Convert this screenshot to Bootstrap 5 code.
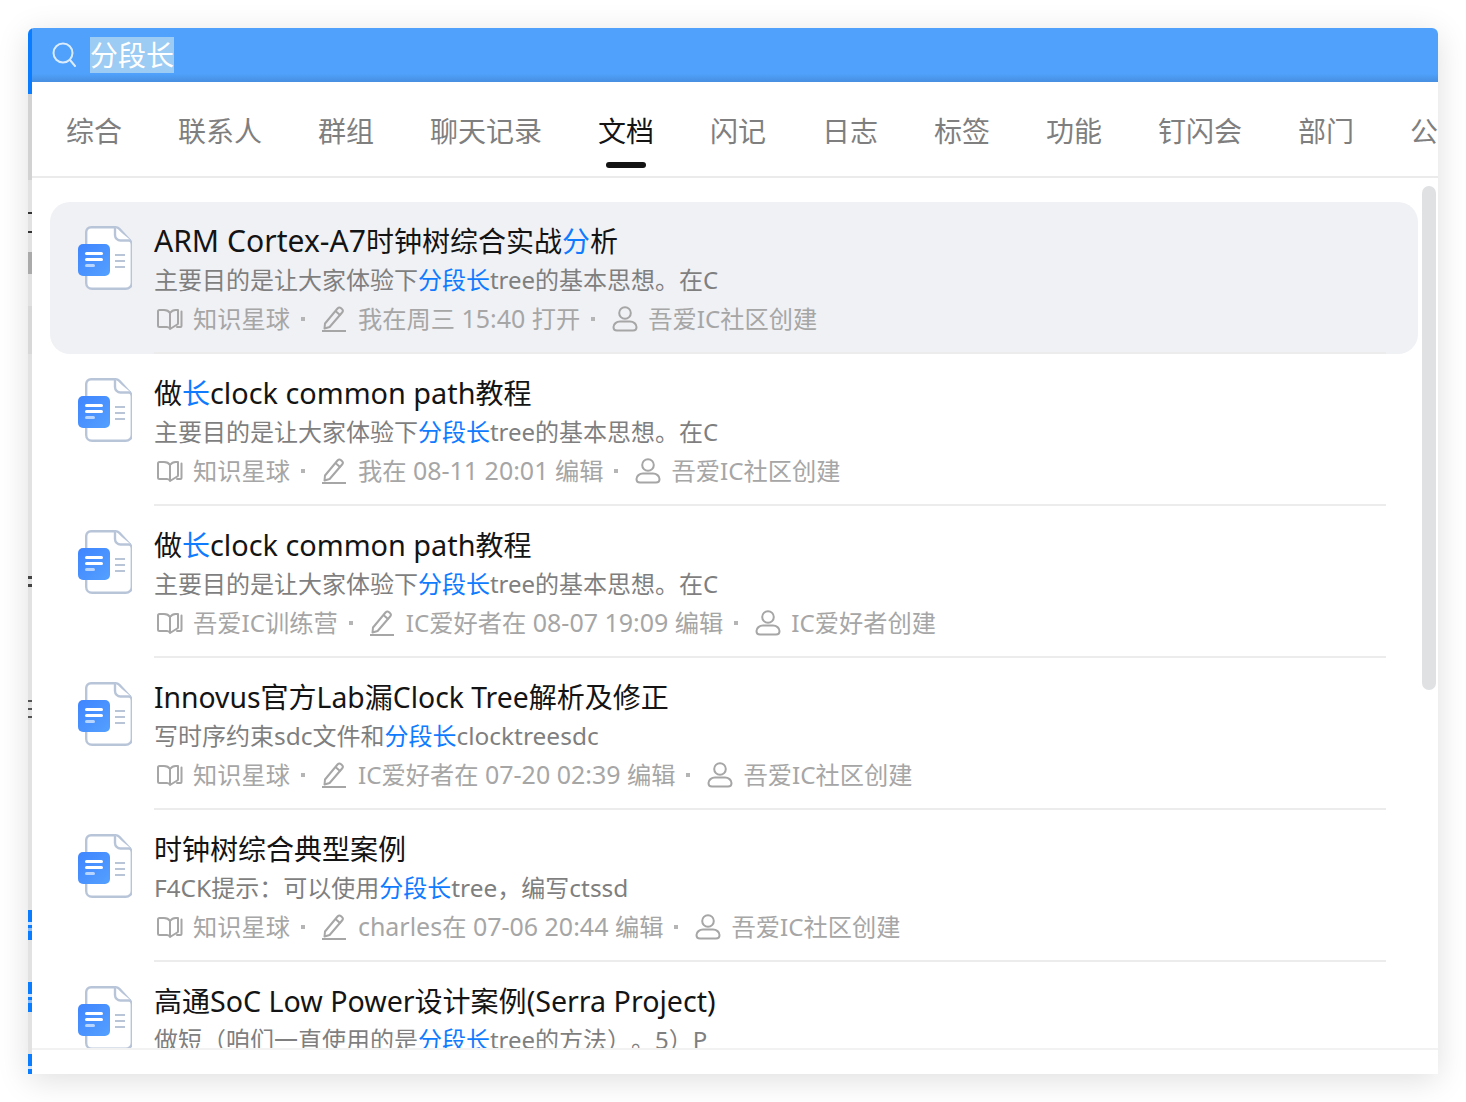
<!DOCTYPE html>
<html lang="zh-CN">
<head>
  <meta charset="UTF-8">
  <title>搜索</title>
  <link href="https://cdn.jsdelivr.net/npm/bootstrap@5.3.3/dist/css/bootstrap.min.css" rel="stylesheet">
  <style>
    body {
      background: #fff;
      padding: 28px;
      font-family: "Noto Sans", "Noto Sans CJK SC", sans-serif;
      overflow: hidden;
    }
    .search-window {
      width: 1410px;
      height: 1046px;
      border-radius: 6px 6px 0 0;
      box-shadow: 0 6px 32px rgba(0, 0, 0, .13);
      overflow: hidden;
    }
    .main-pane { min-width: 0; }
    .left-sliver {
      width: 4px;
      background:
        linear-gradient(#0a7cff 0 66px, transparent 66px),
        linear-gradient(transparent 184px, #333 184px 186px, transparent 186px 203px, #333 203px 205px, transparent 205px 224px, #aaa 224px 246px, transparent 246px 548px, #444 548px 551px, transparent 551px 556px, #444 556px 559px, transparent 559px 672px, #555 672px 674px, transparent 674px 680px, #555 680px 682px, transparent 682px 688px, #555 688px 690px, transparent 690px),
        linear-gradient(transparent 882px, #0a7cff 882px 894px, #cfe3fb 894px 897px, #0a7cff 897px 900px, #8cbcf5 900px 903px, #0a7cff 903px 912px, transparent 912px 954px, #0a7cff 954px 966px, #cfe3fb 966px 969px, #0a7cff 969px 972px, #8cbcf5 972px 975px, #0a7cff 975px 984px, transparent 984px 1026px, #0a7cff 1026px 1038px, #cfe3fb 1038px 1041px, #0a7cff 1041px),
        linear-gradient(transparent 66px, #d2d2d2 66px 152px, #e2e2e2 152px 278px, #d8d8d8 278px 326px, #e2e2e2 326px);
    }
    .search-bar {
      height: 54px;
      padding-left: 20px;
      color: #fff;
      font-size: 28px;
      background: linear-gradient(#4fa1fb 0 46px, #478fe0 54px);
    }
    .search-text {
      background: #9ccbf3;
      height: 36px;
      line-height: 36px;
      margin-left: 14px;
    }
    .tab-strip {
      height: 96px;
      padding: 0 0 0 34px;
      gap: 56px;
      border-bottom: 2px solid #ebebeb;
      overflow: hidden;
    }
    .tab-item {
      position: relative;
      flex: none;
      font-size: 28px;
      line-height: 98px;
      color: #7f7f7f;
    }
    .tab-item.is-active { color: #141414; }
    .tab-item.is-active::after {
      content: "";
      position: absolute;
      left: 8px;
      right: 8px;
      bottom: 8px;
      height: 6px;
      border-radius: 3px;
      background: #141414;
    }
    .result-list {
      height: 870px;
      padding: 24px 20px 0 18px;
      overflow: hidden;
    }
    .list-thumb {
      position: absolute;
      top: 8px;
      right: 2px;
      width: 14px;
      height: 504px;
      border-radius: 7px;
      background: #e0e1e3;
    }
    .result-row {
      height: 152px;
      padding-left: 28px;
      border-radius: 20px;
    }
    .result-row.is-current { background: #f0f1f5; }
    .doc-icon {
      flex: none;
      width: 54px;
      height: 64px;
      margin-top: 24px;
    }
    .result-body {
      flex: 1;
      min-width: 0;
      margin: 0 32px 0 22px;
      padding-top: 20px;
      border-bottom: 2px solid #ececec;
    }
    .result-title {
      font-size: 28px;
      line-height: 38px;
      color: #141414;
    }
    .result-title .lat { font-size: 1.03em; }
    .result-title .lat-wide { font-size: 1.075em; }
    .result-title .lat-mid { font-size: 1.022em; }
    .result-title .lat-slim { font-size: 1.012em; }
    .result-sub {
      font-size: 24px;
      line-height: 40px;
      color: #7f7f7f;
      text-spacing-trim: space-all;
    }
    .result-sub .lat { font-size: 1.02em; }
    .result-meta {
      font-size: 24.25px;
      line-height: 36px;
      color: #a6a6a6;
    }
    .result-meta .lat { font-size: 1.03em; }
    .meta-icon {
      flex: none;
      width: 26px;
      height: 26px;
      margin: 0 10px 0 3px;
    }
    .meta-dot {
      flex: none;
      width: 4px;
      height: 4px;
      margin: 0 14px 0 11px;
      background: #b5b5b5;
    }
    .hit { color: #0f7bff; }
    .search-foot {
      height: 26px;
      border-top: 2px solid #f2f2f2;
    }
  </style>
</head>
<body>

<svg width="0" height="0" class="position-absolute">
  <defs>
    <linearGradient id="docBlue" x1="0" y1="0" x2="1" y2="1">
      <stop offset="0" stop-color="#3f85ff"/>
      <stop offset="1" stop-color="#54a0ff"/>
    </linearGradient>
    <symbol id="docIcon" viewBox="0 0 54 64">
      <path d="M13 1.200h24.500c1.500 0 2.800.6 3.900 1.700l10.700 11.600c1 1.100 1.700 2.400 1.700 3.900V57c0 3.300-2.700 5.800-6 5.800H14c-3.300 0-5.800-2.500-5.800-5.800V6c0-2.800 2-4.800 4.800-4.800z" fill="#fff" stroke="#b8c5d9" stroke-width="2.400"/>
      <path d="M37 1.500V9c0 3 2.500 5.500 5.500 5.500H53" fill="#fff" stroke="#b8c5d9" stroke-width="2.400"/>
      <path d="M37 29h10M37 35h10M37 41h10" stroke="#b8c5d9" stroke-width="2"/>
      <rect x="0" y="18" width="32" height="32" rx="5" fill="url(#docBlue)"/>
      <rect x="7" y="26" width="18" height="3" rx="1.500" fill="#fff"/>
      <rect x="7" y="32" width="18" height="3" rx="1.500" fill="#fff"/>
      <rect x="7" y="38" width="10" height="3" rx="1.500" fill="#b8d5ff"/>
    </symbol>
    <symbol id="bookIcon" viewBox="0 0 26 26">
      <path d="M13 7C11.500 4.500 9.500 4 7 4H2.500C1.700 4 1 4.700 1 5.500v14c0 .8.700 1.500 1.500 1.500H10c1.500 0 2.500.7 3 2V7zM13 7c1.500-2 3-3 5.500-3H21v13.500c0 .5-.3.900-.8 1L13 23" fill="none" stroke="#a6a6a6" stroke-width="2" stroke-linejoin="round"/>
      <path d="M24.500 5.500V20c0 .6-.4 1-1 1H20" fill="none" stroke="#a6a6a6" stroke-width="2" stroke-linecap="round"/>
    </symbol>
    <symbol id="penIcon" viewBox="1 0 26 26">
      <path d="M4 17.500 16.500 2.500c1-1.100 2.500-1.200 3.600-.3l.8.7c1.100 1 1.200 2.500.2 3.600L8.600 21 3.500 22.500z" fill="none" stroke="#a6a6a6" stroke-width="2" stroke-linejoin="round"/>
      <path d="M14.500 5l5 4.500" stroke="#a6a6a6" stroke-width="2"/>
      <path d="M1 25h24" stroke="#a6a6a6" stroke-width="2"/>
    </symbol>
    <symbol id="userIcon" viewBox="0 0 26 26">
      <circle cx="13" cy="7" r="5.800" fill="none" stroke="#a6a6a6" stroke-width="2"/>
      <path d="M8 15.500h10c3.500 0 6.500 2.500 6.500 5.500 0 2.200-1.500 3.500-3.500 3.500H5c-2 0-3.500-1.300-3.500-3.500 0-3 3-5.500 6.500-5.500z" fill="none" stroke="#a6a6a6" stroke-width="2"/>
    </symbol>
  </defs>
</svg>

<div class="search-window d-flex">
  <div class="left-sliver"></div>
  <div class="main-pane flex-grow-1 d-flex flex-column">
    <!-- search -->
    <div class="search-bar d-flex align-items-center">
      <svg width="24" height="26" viewBox="0 0 24 26" fill="none" stroke="#dcecff" stroke-width="2">
        <circle cx="11" cy="11" r="9.500"/>
        <path d="M18 18l5 6" stroke-linecap="round"/>
      </svg>
      <span class="search-text">分段长</span>
    </div>

    <!-- tabs -->
    <div class="tab-strip d-flex">
      <div class="tab-item">综合</div>
      <div class="tab-item">联系人</div>
      <div class="tab-item">群组</div>
      <div class="tab-item">聊天记录</div>
      <div class="tab-item is-active">文档</div>
      <div class="tab-item">闪记</div>
      <div class="tab-item">日志</div>
      <div class="tab-item">标签</div>
      <div class="tab-item">功能</div>
      <div class="tab-item">钉闪会</div>
      <div class="tab-item">部门</div>
      <div class="tab-item">公告</div>
    </div>

    <!-- results -->
    <div class="result-list position-relative">
      <div class="list-thumb"></div>

      <div class="result-row is-current d-flex">
        <svg class="doc-icon"><use href="#docIcon"/></svg>
        <div class="result-body">
          <div class="result-title"><span class="lat-wide">ARM Cortex-A7</span>时钟树综合实战<span class="hit">分</span>析</div>
          <div class="result-sub">主要目的是让大家体验下<span class="hit">分段长</span>tree的基本思想。在C</div>
          <div class="result-meta d-flex align-items-center">
            <svg class="meta-icon"><use href="#bookIcon"/></svg>知识星球<i class="meta-dot"></i>
            <svg class="meta-icon"><use href="#penIcon"/></svg><span>我在周三<span class="lat"> 15:40 </span>打开</span><i class="meta-dot"></i>
            <svg class="meta-icon"><use href="#userIcon"/></svg>吾爱IC社区创建
          </div>
        </div>
      </div>

      <div class="result-row d-flex">
        <svg class="doc-icon"><use href="#docIcon"/></svg>
        <div class="result-body">
          <div class="result-title">做<span class="hit">长</span><span class="lat">clock common path</span>教程</div>
          <div class="result-sub">主要目的是让大家体验下<span class="hit">分段长</span>tree的基本思想。在C</div>
          <div class="result-meta d-flex align-items-center">
            <svg class="meta-icon"><use href="#bookIcon"/></svg>知识星球<i class="meta-dot"></i>
            <svg class="meta-icon"><use href="#penIcon"/></svg><span>我在<span class="lat"> 08-11 20:01 </span>编辑</span><i class="meta-dot"></i>
            <svg class="meta-icon"><use href="#userIcon"/></svg>吾爱IC社区创建
          </div>
        </div>
      </div>

      <div class="result-row d-flex">
        <svg class="doc-icon"><use href="#docIcon"/></svg>
        <div class="result-body">
          <div class="result-title">做<span class="hit">长</span><span class="lat">clock common path</span>教程</div>
          <div class="result-sub">主要目的是让大家体验下<span class="hit">分段长</span>tree的基本思想。在C</div>
          <div class="result-meta d-flex align-items-center">
            <svg class="meta-icon"><use href="#bookIcon"/></svg>吾爱IC训练营<i class="meta-dot"></i>
            <svg class="meta-icon"><use href="#penIcon"/></svg><span>IC爱好者在<span class="lat"> 08-07 19:09 </span>编辑</span><i class="meta-dot"></i>
            <svg class="meta-icon"><use href="#userIcon"/></svg>IC爱好者创建
          </div>
        </div>
      </div>

      <div class="result-row d-flex">
        <svg class="doc-icon"><use href="#docIcon"/></svg>
        <div class="result-body">
          <div class="result-title"><span class="lat-slim">Innovus</span>官方<span class="lat-slim">Lab</span>漏<span class="lat-slim">Clock Tree</span>解析及修正</div>
          <div class="result-sub">写时序约束<span class="lat">sdc</span>文件和<span class="hit">分段长</span><span class="lat">clocktreesdc</span></div>
          <div class="result-meta d-flex align-items-center">
            <svg class="meta-icon"><use href="#bookIcon"/></svg>知识星球<i class="meta-dot"></i>
            <svg class="meta-icon"><use href="#penIcon"/></svg><span>IC爱好者在<span class="lat"> 07-20 02:39 </span>编辑</span><i class="meta-dot"></i>
            <svg class="meta-icon"><use href="#userIcon"/></svg>吾爱IC社区创建
          </div>
        </div>
      </div>

      <div class="result-row d-flex">
        <svg class="doc-icon"><use href="#docIcon"/></svg>
        <div class="result-body">
          <div class="result-title">时钟树综合典型案例</div>
          <div class="result-sub"><span class="lat">F4CK</span>提示：可以使用<span class="hit">分段长</span><span class="lat">tree</span>，编写<span class="lat">ctssd</span></div>
          <div class="result-meta d-flex align-items-center">
            <svg class="meta-icon"><use href="#bookIcon"/></svg>知识星球<i class="meta-dot"></i>
            <svg class="meta-icon"><use href="#penIcon"/></svg><span><span class="lat">charles</span>在<span class="lat"> 07-06 20:44 </span>编辑</span><i class="meta-dot"></i>
            <svg class="meta-icon"><use href="#userIcon"/></svg>吾爱IC社区创建
          </div>
        </div>
      </div>

      <div class="result-row d-flex">
        <svg class="doc-icon"><use href="#docIcon"/></svg>
        <div class="result-body">
          <div class="result-title">高通<span class="lat-mid">SoC Low Power</span>设计案例<span class="lat-mid">(Serra Project)</span></div>
          <div class="result-sub">做短（咱们一直使用的是<span class="hit">分段长</span>tree的方法）。5）P</div>
        </div>
      </div>
    </div>

    <div class="search-foot"></div>
  </div>
</div>

<script src="https://cdn.jsdelivr.net/npm/bootstrap@5.3.3/dist/js/bootstrap.bundle.min.js"></script>
</body>
</html>
